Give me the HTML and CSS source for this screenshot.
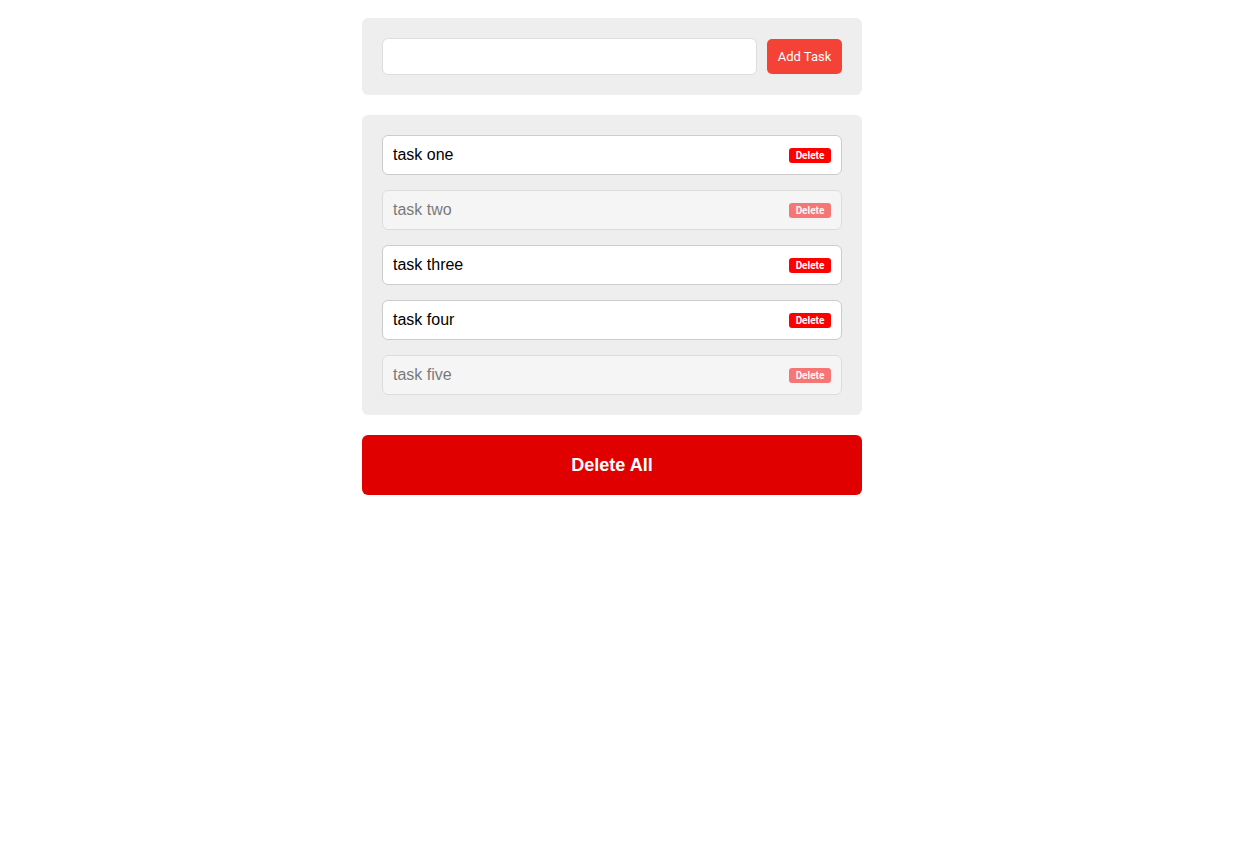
FILE: index.html
```html
<!DOCTYPE html>
<html lang="en">
<head>
    <meta charset="UTF-8">
    <meta name="viewport" content="width=device-width, initial-scale=1">
    <title>Todo List</title>
    <link rel="stylesheet" href="styles.css">
</head>
<body>
    <div class="container">
        <!-- New task -->
        <form class="panel add-form">
            <input type="text" class="task-input">
            <button type="button" class="add-btn">Add Task</button>
        </form>

        <!-- Task list -->
        <ul class="panel task-list">
            <li class="task">
                <span class="task-text">task one</span>
                <button type="button" class="delete-btn">Delete</button>
            </li>
            <li class="task done">
                <span class="task-text">task two</span>
                <button type="button" class="delete-btn">Delete</button>
            </li>
            <li class="task">
                <span class="task-text">task three</span>
                <button type="button" class="delete-btn">Delete</button>
            </li>
            <li class="task">
                <span class="task-text">task four</span>
                <button type="button" class="delete-btn">Delete</button>
            </li>
            <li class="task done">
                <span class="task-text">task five</span>
                <button type="button" class="delete-btn">Delete</button>
            </li>
        </ul>

        <button type="button" class="delete-all">Delete All</button>
    </div>
</body>
</html>
```

FILE: styles.css
```css
* {
    margin: 0;
    padding: 0;
    box-sizing: border-box;
}

body {
    background: #fff;
    padding-top: 18px;
    padding-right: 18px;
    font-family: "Liberation Sans", Arial, sans-serif;
    color: #000;
}

.container {
    width: 500px;
    margin: 0 auto;
    display: flex;
    flex-direction: column;
    gap: 20px;
}

.panel {
    background: #eeeeee;
    border-radius: 6px;
    padding: 20px;
}

.add-form {
    display: flex;
    align-items: center;
    gap: 10px;
}

.task-input {
    flex: 1;
    height: 37px;
    border: 1px solid #dddddd;
    border-radius: 6px;
    background: #fff;
    padding: 0 10px;
    font-size: 16px;
    outline: none;
}

.add-btn {
    width: 75px;
    height: 35px;
    border: none;
    border-radius: 5px;
    background: #f44336;
    color: #fff;
    font-family: Roboto, sans-serif;
    font-size: 13px;
    cursor: pointer;
}

.task-list {
    list-style: none;
    display: flex;
    flex-direction: column;
    gap: 15px;
}

.task {
    height: 40px;
    display: flex;
    align-items: center;
    justify-content: space-between;
    padding: 0 10px;
    background: #fff;
    border: 1px solid #cccccc;
    border-radius: 6px;
    font-size: 16px;
}

.task.done {
    opacity: 0.5;
    background: #fcfcfc;
}

.delete-btn {
    width: 42px;
    height: 15px;
    border: none;
    border-radius: 3px;
    background: #ff0000;
    color: #fff;
    font-family: Roboto, sans-serif;
    font-size: 10px;
    font-weight: 700;
    line-height: 15px;
    cursor: pointer;
}

.delete-all {
    height: 60px;
    border: none;
    border-radius: 6px;
    background: #e00000;
    color: #fff;
    font-family: "Liberation Sans", Arial, sans-serif;
    font-size: 18px;
    font-weight: 700;
    cursor: pointer;
}
```
